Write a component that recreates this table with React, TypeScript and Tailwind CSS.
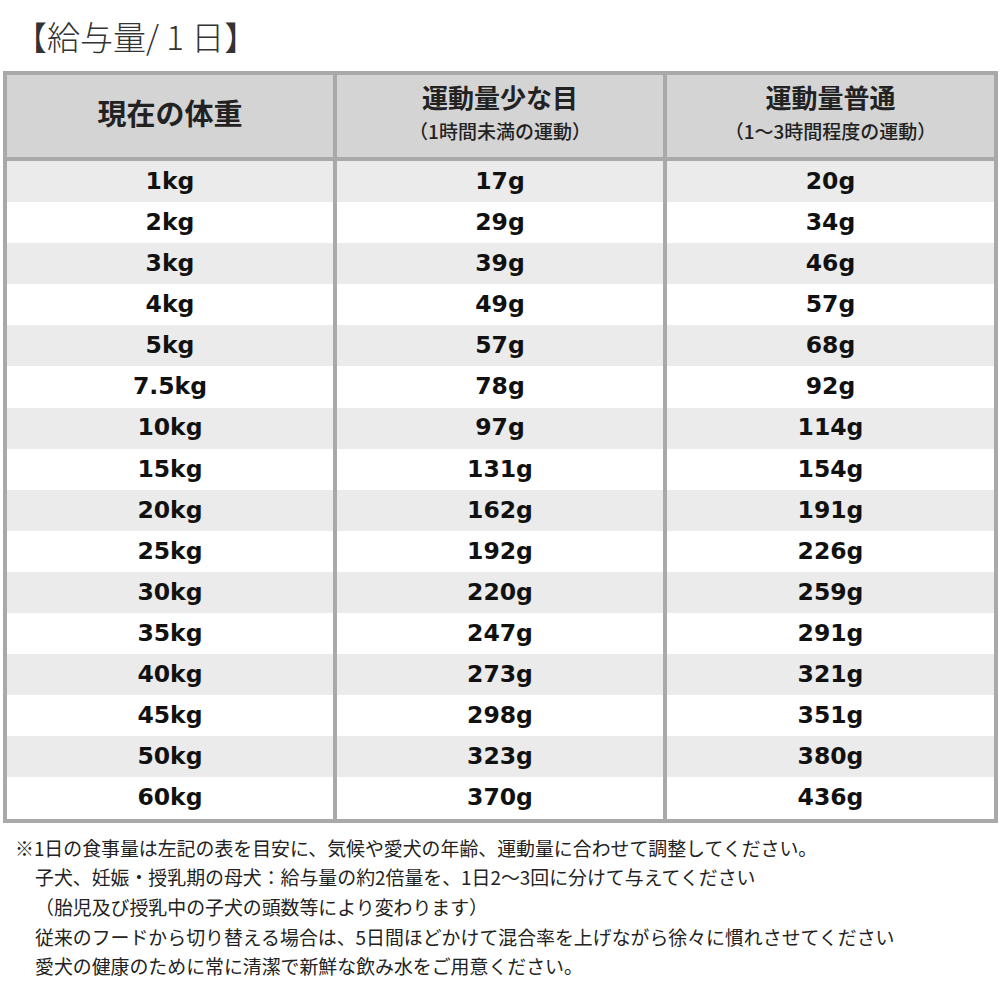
const rows = [
  ["1kg", "17g", "20g"],
  ["2kg", "29g", "34g"],
  ["3kg", "39g", "46g"],
  ["4kg", "49g", "57g"],
  ["5kg", "57g", "68g"],
  ["7.5kg", "78g", "92g"],
  ["10kg", "97g", "114g"],
  ["15kg", "131g", "154g"],
  ["20kg", "162g", "191g"],
  ["25kg", "192g", "226g"],
  ["30kg", "220g", "259g"],
  ["35kg", "247g", "291g"],
  ["40kg", "273g", "321g"],
  ["45kg", "298g", "351g"],
  ["50kg", "323g", "380g"],
  ["60kg", "370g", "436g"],
]

const notes = [
  "子犬、妊娠・授乳期の母犬：給与量の約2倍量を、1日2〜3回に分けて与えてください",
  "（胎児及び授乳中の子犬の頭数等により変わります）",
  "従来のフードから切り替える場合は、5日間ほどかけて混合率を上げながら徐々に慣れさせてください",
  "愛犬の健康のために常に清潔で新鮮な飲み水をご用意ください。",
]

const jp = "font-['Noto_Sans_CJK_JP','Noto_Sans',sans-serif]"
const num = "font-['DejaVu_Sans',sans-serif]"

export default function App() {
  return (
    <div className={`w-[1000px] h-[1000px] bg-white text-[#222] ${jp}`}>
      <div className="h-[71px] pl-[14px] pt-[16px]">
        <h1 className="text-[33px] leading-[40px] font-light text-[#333]">【給与量/ 1 日】</h1>
      </div>

      <div className="ml-[3px] w-[995px] border-4 border-[#a9a9a9]">
        <div className="grid grid-cols-[330px_330px_327px] h-[86px] bg-[#d4d4d4] border-b-4 border-[#a9a9a9]">
          <div className="border-r-4 border-[#a9a9a9] flex items-center justify-center pb-[6px]">
            <span className="text-[29px] font-bold">現在の体重</span>
          </div>
          <div className="border-r-4 border-[#a9a9a9] flex flex-col items-center justify-center pb-[4px]">
            <span className="text-[26px] font-bold leading-[34px]">運動量少な目</span>
            <span className="text-[19px] font-medium leading-[34px]">（1時間未満の運動）</span>
          </div>
          <div className="flex flex-col items-center justify-center pb-[4px]">
            <span className="text-[26px] font-bold leading-[34px]">運動量普通</span>
            <span className="text-[19px] font-medium leading-[34px]">（1〜3時間程度の運動）</span>
          </div>
        </div>

        {rows.map((row, i) => (
          <div
            key={i}
            className={`grid grid-cols-[330px_330px_327px] h-[41.1px] ${i % 2 === 0 ? "bg-[#ebebeb]" : "bg-white"}`}
          >
            {row.map((cell, j) => (
              <div
                key={j}
                className={`flex items-center justify-center ${num} text-[23.5px] font-bold text-[#111] ${j < 2 ? "border-r-4 border-[#a9a9a9]" : ""}`}
              >
                {cell}
              </div>
            ))}
          </div>
        ))}
      </div>

      <div className="mt-[10px] text-[18.9px] leading-[29.7px] text-[#222]">
        <p className="pl-[15px]">※1日の食事量は左記の表を目安に、気候や愛犬の年齢、運動量に合わせて調整してください。</p>
        {notes.map((n, i) => (
          <p key={i} className="pl-[35px]">
            {n}
          </p>
        ))}
      </div>
    </div>
  )
}
